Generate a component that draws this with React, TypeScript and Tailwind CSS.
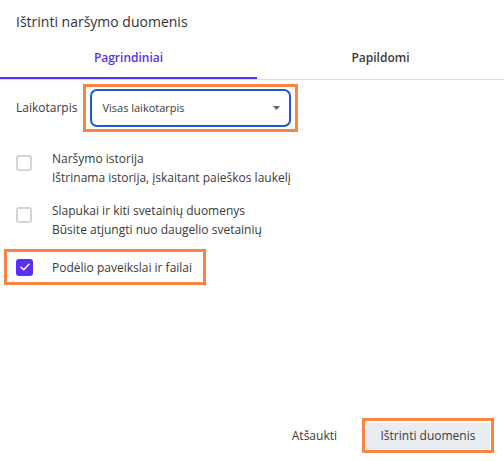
import { useState } from "react";

const font = { fontFamily: '"Open Sans", "Noto Sans", sans-serif' };

interface CheckRowProps {
  title: string;
  subtitle: string;
}

const CheckRow = ({ title, subtitle }: CheckRowProps) => {
  return (
    <div className="flex items-start gap-[20px]">
      <div className="mt-[6px] size-[16px] shrink-0 rounded-[3px] border-2 border-[#d4d4d8] bg-white" />
      <div className="text-[12px] leading-[19px] text-[#3a3a3a]">
        <div>{title}</div>
        <div>{subtitle}</div>
      </div>
    </div>
  );
};

export default function App() {
  const [tab, setTab] = useState(0);

  return (
    <div style={font} className="flex h-[461px] w-[504px] flex-col bg-white">
      <div className="px-[16px] pt-[10px] text-[14px] leading-[24px] text-[#333]">
        Ištrinti naršymo duomenis
      </div>

      {/* Tabs */}
      <div className="mt-[5px] flex border-b border-[#dcdcdc]">
        {["Pagrindiniai", "Papildomi"].map((label, i) => (
          <button
            key={label}
            onClick={() => setTab(i)}
            className={
              tab === i
                ? "h-[40px] w-[257px] border-b-2 border-[#5b2ef4] text-[12px] font-semibold text-[#5b2ef4]"
                : "h-[40px] flex-1 border-b-2 border-transparent text-[12px] font-semibold text-[#3a3a3a]"
            }
          >
            {label}
          </button>
        ))}
      </div>

      {/* Period */}
      <div className="mt-[4px] flex items-center gap-[6px] pl-[16px]">
        <span className="text-[12px] text-[#3a3a3a]">Laikotarpis</span>
        <div className="border-[3px] border-[#fa8440] px-[4px] py-[2px]">
          <div className="flex h-[38px] w-[201px] items-center justify-between rounded-[7px] border-2 border-[#1c5bd1] pl-[10px] pr-[9px]">
            <span className="text-[11px] text-[#3a3a3a]">Visas laikotarpis</span>
            <svg width="7" height="4" viewBox="0 0 7 4">
              <path d="M0 0h7L3.5 4z" fill="#606060" />
            </svg>
          </div>
        </div>
      </div>

      <div className="mt-[17px] flex flex-col gap-[14px] pl-[16px]">
        <CheckRow title="Naršymo istorija" subtitle="Ištrinama istorija, įskaitant paieškos laukelį" />
        <CheckRow title="Slapukai ir kiti svetainių duomenys" subtitle="Būsite atjungti nuo daugelio svetainių" />
      </div>

      <div className="ml-[4px] mt-[10px] w-[202px] border-[3px] border-[#fa8440] pl-[9px]">
        <div className="flex h-[30px] items-center gap-[19px]">
          <div className="flex size-[17px] items-center justify-center rounded-[3px] bg-[#5b2ef4]">
            <svg width="10" height="8" viewBox="0 0 10 8" fill="none">
              <path d="M1 4.2 3.7 6.8 9 1.2" stroke="white" strokeWidth="1.4" strokeLinecap="round" strokeLinejoin="round" />
            </svg>
          </div>
          <span className="text-[12px] leading-[19px] text-[#3a3a3a]">Podėlio paveikslai ir failai</span>
        </div>
      </div>

      <div className="mt-auto flex items-center justify-end gap-[25px] pb-[8px] pr-[10px]">
        <button className="text-[12px] text-[#3a3a3a]">Atšaukti</button>
        <div className="border-[3px] border-[#fa8440] p-[1px]">
          <button className="h-[26px] w-[124px] bg-[#e9edf1] text-[12px] text-[#3a3a3a]">
            Ištrinti duomenis
          </button>
        </div>
      </div>
    </div>
  );
}
